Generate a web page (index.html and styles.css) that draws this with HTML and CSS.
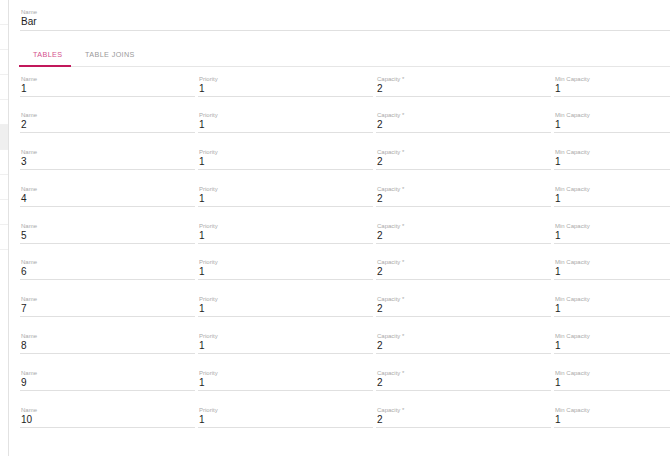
FILE: index.html
```html
<!DOCTYPE html>
<html>
<head>
<meta charset="utf-8">
<link rel="stylesheet" href="styles.css">
</head>
<body>
<aside class="sidebar">
  <div class="side-item"></div>
  <div class="side-item"></div>
  <div class="side-item"></div>
  <div class="side-item"></div>
  <div class="side-item"></div>
  <div class="side-item side-active"></div>
  <div class="side-item"></div>
  <div class="side-item"></div>
  <div class="side-item"></div>
  <div class="side-item"></div>
</aside>
<main class="main">
  <div class="field top-field">
    <div class="label">Name</div>
    <div class="value">Bar</div>
  </div>
  <nav class="tabs">
    <div class="tab tab-active">Tables</div>
    <div class="tab">Table Joins</div>
  </nav>
  <div class="rows">
    <div class="row"><div class="field"><div class="label">Name</div><div class="value">1</div></div><div class="field"><div class="label">Priority</div><div class="value">1</div></div><div class="field"><div class="label">Capacity *</div><div class="value">2</div></div><div class="field"><div class="label">Min Capacity</div><div class="value">1</div></div></div>
    <div class="row"><div class="field"><div class="label">Name</div><div class="value">2</div></div><div class="field"><div class="label">Priority</div><div class="value">1</div></div><div class="field"><div class="label">Capacity *</div><div class="value">2</div></div><div class="field"><div class="label">Min Capacity</div><div class="value">1</div></div></div>
    <div class="row"><div class="field"><div class="label">Name</div><div class="value">3</div></div><div class="field"><div class="label">Priority</div><div class="value">1</div></div><div class="field"><div class="label">Capacity *</div><div class="value">2</div></div><div class="field"><div class="label">Min Capacity</div><div class="value">1</div></div></div>
    <div class="row"><div class="field"><div class="label">Name</div><div class="value">4</div></div><div class="field"><div class="label">Priority</div><div class="value">1</div></div><div class="field"><div class="label">Capacity *</div><div class="value">2</div></div><div class="field"><div class="label">Min Capacity</div><div class="value">1</div></div></div>
    <div class="row"><div class="field"><div class="label">Name</div><div class="value">5</div></div><div class="field"><div class="label">Priority</div><div class="value">1</div></div><div class="field"><div class="label">Capacity *</div><div class="value">2</div></div><div class="field"><div class="label">Min Capacity</div><div class="value">1</div></div></div>
    <div class="row"><div class="field"><div class="label">Name</div><div class="value">6</div></div><div class="field"><div class="label">Priority</div><div class="value">1</div></div><div class="field"><div class="label">Capacity *</div><div class="value">2</div></div><div class="field"><div class="label">Min Capacity</div><div class="value">1</div></div></div>
    <div class="row"><div class="field"><div class="label">Name</div><div class="value">7</div></div><div class="field"><div class="label">Priority</div><div class="value">1</div></div><div class="field"><div class="label">Capacity *</div><div class="value">2</div></div><div class="field"><div class="label">Min Capacity</div><div class="value">1</div></div></div>
    <div class="row"><div class="field"><div class="label">Name</div><div class="value">8</div></div><div class="field"><div class="label">Priority</div><div class="value">1</div></div><div class="field"><div class="label">Capacity *</div><div class="value">2</div></div><div class="field"><div class="label">Min Capacity</div><div class="value">1</div></div></div>
    <div class="row"><div class="field"><div class="label">Name</div><div class="value">9</div></div><div class="field"><div class="label">Priority</div><div class="value">1</div></div><div class="field"><div class="label">Capacity *</div><div class="value">2</div></div><div class="field"><div class="label">Min Capacity</div><div class="value">1</div></div></div>
    <div class="row"><div class="field"><div class="label">Name</div><div class="value">10</div></div><div class="field"><div class="label">Priority</div><div class="value">1</div></div><div class="field"><div class="label">Capacity *</div><div class="value">2</div></div><div class="field"><div class="label">Min Capacity</div><div class="value">1</div></div></div>
  </div>
</main>
</body>
</html>
```
FILE: styles.css
```css
html, body {
  margin: 0;
  padding: 0;
  background: #fff;
  height: 100%;
  overflow: hidden;
}
body {
  display: flex;
  font-family: "Liberation Sans", Arial, sans-serif;
  color: #333;
}
.sidebar {
  width: 8px;
  flex: none;
  border-right: 1px solid #e2e2e2;
  min-height: 456px;
}
.side-item {
  height: 24px;
  border-bottom: 1px solid #f0f0f0;
}
.side-active {
  background: #efefef;
}
.main {
  flex: 1;
  min-width: 0;
  overflow: hidden;
  padding-left: 11px;
}
.field {
  border-bottom: 1px solid #e0e0e0;
  padding-bottom: 2px;
  min-width: 0;
}
.label {
  font-size: 6px;
  line-height: 7px;
  color: #aaa;
  padding-left: 1px;
  white-space: nowrap;
}
.value {
  font-size: 10px;
  line-height: 12px;
  color: #222;
  padding-left: 1px;
}
.top-field {
  margin-top: 9px;
  padding-bottom: 2px;
}
.tabs {
  display: flex;
  margin-top: 11px;
  border-bottom: 1px solid #e6e6e6;
  margin-left: -1px;
}
.tab {
  height: 24px;
  line-height: 22px;
  padding: 2px 13px 0 14px;
  font-size: 7.2px;
  letter-spacing: 0.4px;
  text-transform: uppercase;
  color: #999;
  box-sizing: border-box;
  white-space: nowrap;
}
.tab-active {
  color: #d4508c;
  border-bottom: 2px solid #c2185b;
  line-height: 21px;
  margin-bottom: -1px;
  height: 25px;
  width: 52px;
}
.rows {
  display: flex;
  flex-direction: column;
  gap: 15.8px;
  padding-top: 8.5px;
}
.row {
  display: grid;
  grid-template-columns: repeat(4, 175px);
  column-gap: 3px;
}
.row .field {
  padding-bottom: 1px;
}
```
